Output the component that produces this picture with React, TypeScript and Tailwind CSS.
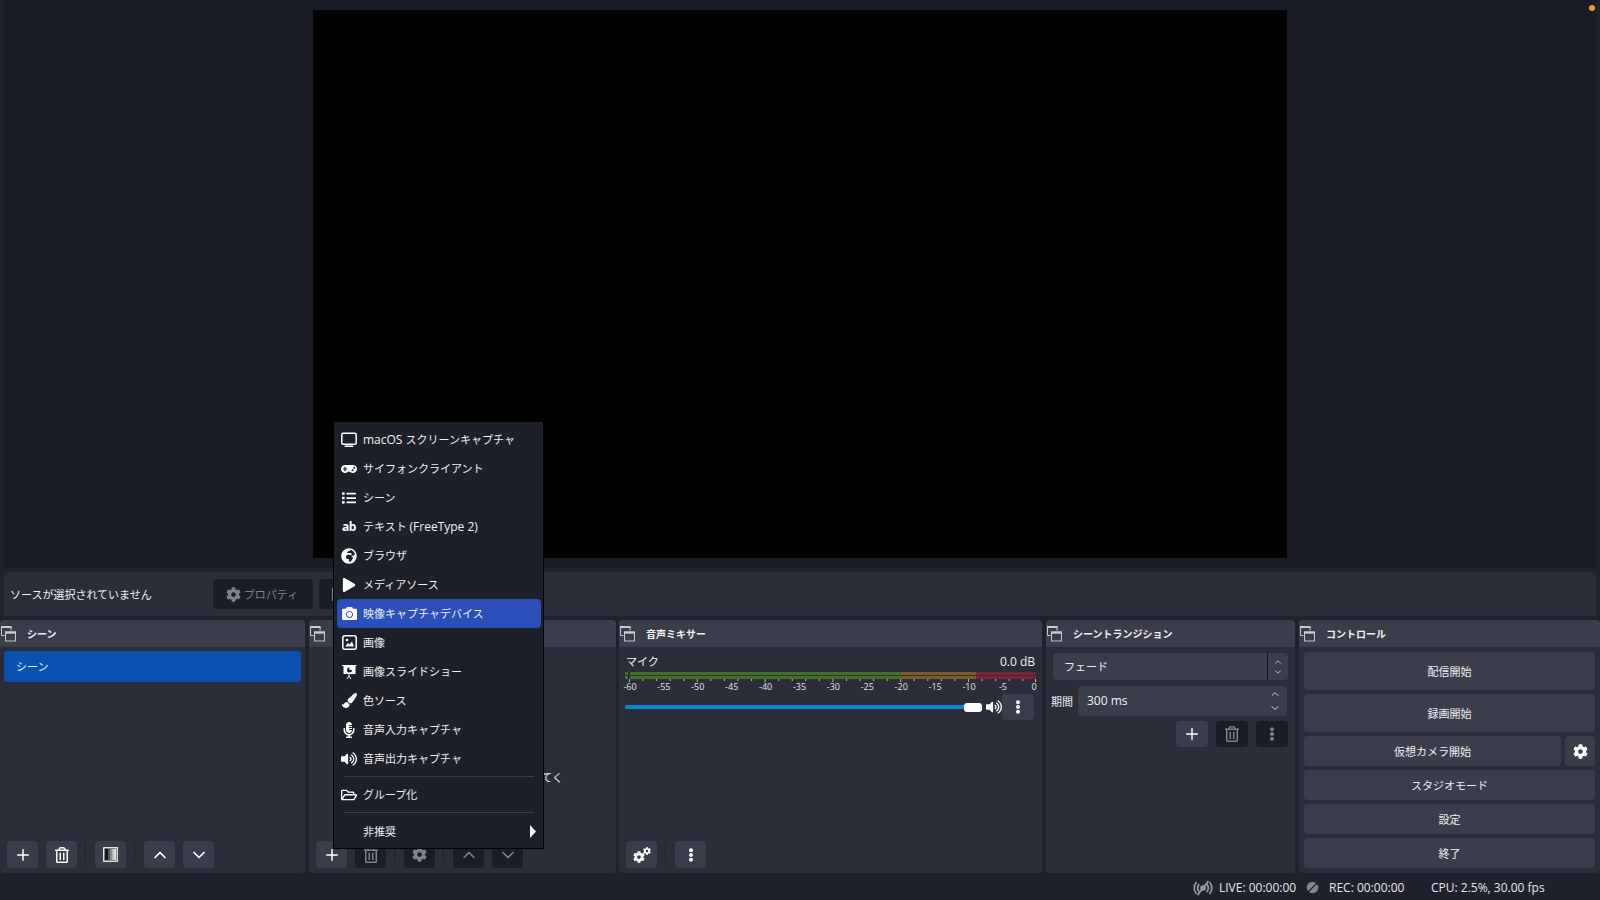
import React from 'react';
import {
  FaCamera,
  FaCog,
  FaEllipsisV,
  FaGamepad,
  FaGlobeAfrica,
  FaList,
  FaMicrophoneAlt,
  FaPaintBrush,
  FaPlay,
  FaRegFolderOpen,
  FaRegTrashAlt,
  FaVolumeUp,
} from 'react-icons/fa';
import { ChevronDown, ChevronUp, Plus } from 'lucide-react';

const FONT = "font-['Open_Sans','Noto_Sans_CJK_JP',sans-serif]";

const DockIcon = () => (
  <svg width="17" height="17" viewBox="0 0 17 17" className="shrink-0" fill="none">
    <path d="M4.500 10.500H1.500V1.500H11V5.500" stroke="#c9cad0" strokeWidth="1" />
    <rect x="1" y="1" width="10.500" height="2" fill="#c9cad0" />
    <rect x="5.500" y="7" width="10" height="9" stroke="#c9cad0" strokeWidth="1" />
    <rect x="5" y="6.500" width="11" height="2.200" fill="#c9cad0" />
  </svg>
);

const Dock = ({
  title,
  className,
  children,
}: {
  title: string;
  className: string;
  children: React.ReactNode;
}) => (
  <section className={`flex flex-col rounded-[4px] bg-[#2b2e38] overflow-hidden ${className}`}>
    <header className="flex h-[27px] shrink-0 items-center bg-[#3b3e4a]">
      <DockIcon />
      <span className="ml-[10px] pt-[2px] text-[10px] font-bold text-[#f0f0f2]">{title}</span>
    </header>
    {children}
  </section>
);

const ToolButton = ({
  disabled,
  className = 'w-[31px] h-[27px]',
  children,
}: {
  disabled?: boolean;
  className?: string;
  children: React.ReactNode;
}) => (
  <button
    type="button"
    className={`flex shrink-0 items-center justify-center rounded-[4px] ${className} ${
      disabled ? 'bg-[#1a1c26] text-[#80828a]' : 'bg-[#3b3e4a] text-white'
    }`}
  >
    {children}
  </button>
);

const Separator = () => (
  <div className="ml-[8px] mr-[9px] h-[24px] w-px shrink-0 bg-[linear-gradient(#0d0e12_1px,transparent_1px)] bg-[length:1px_3px]" />
);

const TransitionIcon = () => (
  <svg width="15" height="15" viewBox="0 0 15 15" fill="none">
    <rect x="0.750" y="0.750" width="13.500" height="13.500" stroke="white" strokeWidth="1.200" />
    <rect x="2" y="2" width="3" height="11" fill="#16171d" />
    <rect x="5" y="2" width="2" height="11" fill="#55565c" />
    <rect x="7" y="2" width="2" height="11" fill="#8a8b90" />
    <rect x="9" y="2" width="2" height="11" fill="#b9babd" />
    <rect x="11" y="2" width="2" height="11" fill="#e4e4e6" />
  </svg>
);

const ScreenIcon = () => (
  <svg width="16" height="16" viewBox="0 0 16 16" fill="none">
    <rect x="0.800" y="1.300" width="14.400" height="11" rx="1.500" stroke="white" strokeWidth="1.500" />
    <rect x="3.500" y="13.500" width="9" height="1.500" rx="0.700" fill="white" />
  </svg>
);

const ImageIcon = () => (
  <svg width="15" height="15" viewBox="0 0 15 15" fill="none">
    <rect x="0.800" y="0.800" width="13.400" height="13.400" rx="2" stroke="white" strokeWidth="1.500" />
    <circle cx="5" cy="5" r="1.300" fill="white" />
    <path d="M3 11.500L6 8l1.500 1.500L10 6.500l2 5z" fill="white" />
  </svg>
);

const SlideshowIcon = () => (
  <svg width="16" height="16" viewBox="0 0 16 16">
    <path
      fillRule="evenodd"
      d="M0.500 1h15v1h-1v8h-12V2h-1.000zM8.500 3.500a2.500 2.500 0 1 0 2.500 2.500H8.500z"
      fill="white"
    />
    <path d="M7.500 10h1v2l2 3h-1l-1.500-2.200L6.500 15h-1l2-3z" fill="white" />
  </svg>
);

const ABIcon = () => <span className="text-[12px] font-bold leading-none tracking-[-0.5px] text-white">ab</span>;

const Latin = ({ children }: { children: React.ReactNode }) => <span className="text-[12px]">{children}</span>;

const MENU_ITEMS: Array<{ id: string; label: React.ReactNode; icon: React.ReactNode; active?: boolean }> = [
  {
    id: 'screen',
    label: (
      <>
        <Latin>macOS </Latin>スクリーンキャプチャ
      </>
    ),
    icon: <ScreenIcon />,
  },
  { id: 'syphon', label: 'サイフォンクライアント', icon: <FaGamepad size={16} /> },
  { id: 'scene', label: 'シーン', icon: <FaList size={14} /> },
  {
    id: 'text',
    label: (
      <>
        テキスト <Latin>(FreeType 2)</Latin>
      </>
    ),
    icon: <ABIcon />,
  },
  { id: 'browser', label: 'ブラウザ', icon: <FaGlobeAfrica size={16} /> },
  { id: 'media', label: 'メディアソース', icon: <FaPlay size={14} /> },
  { id: 'video', label: '映像キャプチャデバイス', icon: <FaCamera size={15} />, active: true },
  { id: 'image', label: '画像', icon: <ImageIcon /> },
  { id: 'slideshow', label: '画像スライドショー', icon: <SlideshowIcon /> },
  { id: 'color', label: '色ソース', icon: <FaPaintBrush size={15} /> },
  { id: 'input', label: '音声入力キャプチャ', icon: <FaMicrophoneAlt size={16} /> },
  { id: 'output', label: '音声出力キャプチャ', icon: <FaVolumeUp size={16} /> },
];

const MenuRow = ({
  label,
  icon,
  active,
  trailing,
}: {
  label: React.ReactNode;
  icon?: React.ReactNode;
  active?: boolean;
  trailing?: React.ReactNode;
}) => (
  <div
    className={`flex h-[29px] items-center rounded-[4px] pl-[4px] pr-[5px] ${active ? 'bg-[#2a4fb9]' : ''}`}
  >
    <span className="flex w-[16px] shrink-0 items-center justify-center text-white">{icon}</span>
    <span className="ml-[6px] flex-1 text-[11px] leading-[16px] text-[#f0f0f2]">{label}</span>
    {trailing}
  </div>
);

const SourceMenu = () => (
  <div className="absolute left-[333px] top-[421px] z-10 h-[428px] w-[211px] border border-black bg-[#1e2029] pl-[3px] pr-[2px] pt-[3px]">
    {MENU_ITEMS.map(({ id, ...item }) => (
      <MenuRow key={id} {...item} />
    ))}
    <div className="mx-[7px] mt-[3px] h-px bg-[#3b3e4a]" />
    <div className="mt-[3px]">
      <MenuRow label="グループ化" icon={<FaRegFolderOpen size={16} />} />
    </div>
    <div className="mx-[7px] mt-[3px] h-px bg-[#3b3e4a]" />
    <div className="mt-[4px]">
      <MenuRow
        label="非推奨"
        trailing={
          <svg width="6" height="13" viewBox="0 0 6 13">
            <path d="M0 0l6 6.500-6 6.500z" fill="white" />
          </svg>
        }
      />
    </div>
  </div>
);

const DB_LABELS = [-60, -55, -50, -45, -40, -35, -30, -25, -20, -15, -10, -5, 0];

const MeterScale = () => (
  <svg width="411" height="16" viewBox="0 0 411 16" className="block overflow-visible">
    {Array.from({ length: 31 }, (_, index) => {
      const x = 4 + index * 2 * 6.78;
      return (
        <rect key={index} x={Math.min(x, 410)} y={0} width={1} height={(index * 2) % 5 === 0 ? 3 : 2} fill="#b9bac0" />
      );
    })}
    {DB_LABELS.map((db) => {
      const x = 5 + (db + 60) * 6.78;
      return (
        <text
          key={db}
          x={db === 0 ? 409 : x}
          y={11}
          textAnchor="middle"
          fill="#e4e4e8"
          fontSize="9"
          fontFamily="'Open Sans', sans-serif"
        >
          {db}
        </text>
      );
    })}
  </svg>
);

const MeterRow = () => (
  <div className="flex h-[3px]">
    <div className="w-[276px] bg-[#3f7222]" />
    <div className="w-[75px] bg-[#7c5a24]" />
    <div className="w-[60px] bg-[#7a2334]" />
  </div>
);

const ControlButton = ({ label, className }: { label: string; className: string }) => (
  <button
    type="button"
    className={`flex items-center justify-center rounded-[4px] bg-[#3b3e4a] pt-[2px] text-[11px] text-[#f0f0f2] ${className}`}
  >
    {label}
  </button>
);

const StreamOffIcon = () => (
  <svg width="20" height="16" viewBox="0 0 20 16" fill="none" stroke="#9a9ba0" strokeWidth="1.700">
    <path d="M3.500 2C0.500 5.500 0.500 10.500 3.500 14M16.500 2C19.500 5.500 19.500 10.500 16.500 14" />
    <path d="M6.200 4C4.300 6.500 4.300 9.500 6.200 12M13.800 4C15.700 6.500 15.700 9.500 13.800 12" />
    <circle cx="10" cy="8" r="2.800" fill="#9a9ba0" stroke="none" />
    <path d="M4.500 15L15.500 1" strokeWidth="1.800" />
  </svg>
);

const RecOffIcon = () => (
  <svg width="13" height="13" viewBox="0 0 13 13">
    <circle cx="6.500" cy="6.500" r="5.800" fill="#85868a" />
    <path d="M0.500 12.500L12.500 0.500" stroke="#1f222c" strokeWidth="1.200" />
  </svg>
);

const SceneToolbar = () => (
  <div className="mt-auto flex items-center pb-[5px] pl-[7px]">
    <ToolButton>
      <Plus size={18} strokeWidth={2} />
    </ToolButton>
    <ToolButton className="ml-[8px] h-[27px] w-[31px]">
      <FaRegTrashAlt size={16} />
    </ToolButton>
    <Separator />
    <ToolButton>
      <TransitionIcon />
    </ToolButton>
    <Separator />
    <ToolButton>
      <ChevronUp size={20} strokeWidth={2} />
    </ToolButton>
    <ToolButton className="ml-[8px] h-[27px] w-[31px]">
      <ChevronDown size={20} strokeWidth={2} />
    </ToolButton>
  </div>
);

const SourceToolbar = () => (
  <div className="mt-auto flex items-center pb-[5px] pl-[7px]">
    <ToolButton>
      <Plus size={18} strokeWidth={2} />
    </ToolButton>
    <ToolButton disabled className="ml-[8px] h-[27px] w-[31px]">
      <FaRegTrashAlt size={16} />
    </ToolButton>
    <Separator />
    <ToolButton disabled>
      <FaCog size={15} />
    </ToolButton>
    <Separator />
    <ToolButton disabled>
      <ChevronUp size={20} strokeWidth={2} />
    </ToolButton>
    <ToolButton disabled className="ml-[8px] h-[27px] w-[31px]">
      <ChevronDown size={20} strokeWidth={2} />
    </ToolButton>
  </div>
);

export default function App() {
  return (
    <div className={`relative flex h-[900px] w-[1600px] flex-col overflow-hidden bg-[#1f222c] ${FONT}`}>
      <div className="mx-[4px] flex h-[568px] shrink-0 items-start justify-center bg-[#191c26] pt-[10px]">
        <div className="h-[548px] w-[974px] bg-black" />
      </div>

      <div className="mx-[4px] mt-[4px] flex h-[44px] shrink-0 items-center rounded-[4px] bg-[#2b2e38] pl-[6px]">
        <span className="w-[203px] pt-[2px] text-[11px] text-[#f0f0f2]">ソースが選択されていません</span>
        <button
          type="button"
          className="flex h-[30px] w-[100px] items-center justify-center gap-[3px] rounded-[4px] bg-[#1a1c26] pr-[2px] text-[11px] text-[#80828a]"
        >
          <FaCog size={15} />
          <span className="pt-[2px]">プロパティ</span>
        </button>
        <button
          type="button"
          className="ml-[6px] flex h-[30px] w-[100px] items-center rounded-[4px] bg-[#1a1c26] pl-[13px] text-[#80828a]"
        >
          <span className="h-[13px] w-[2px] bg-[#80828a]" />
        </button>
      </div>

      <div className="mt-[4px] flex h-[253px] shrink-0">
        <Dock title="シーン" className="w-[305px]">
          <div className="mx-[4px] mt-[4px] flex h-[31px] items-center rounded-[3px] bg-[#0a50b0] pl-[12px] pt-[2px] text-[11px] text-[#f0f0f2]">
            シーン
          </div>
          <SceneToolbar />
        </Dock>

        <Dock title="ソース" className="ml-[4px] w-[307px]">
          <div className="mt-[123px] overflow-hidden whitespace-nowrap pr-[53px] text-right text-[11px] text-[#f0f0f2]">
            下の + ボタンをクリックして追加してく
          </div>
          <SourceToolbar />
        </Dock>

        <Dock title="音声ミキサー" className="ml-[3px] w-[423px]">
          <div className="flex items-center justify-between pl-[7px] pr-[7px] pt-[6px] text-[11px] leading-[18px] text-[#f0f0f2]">
            <span>マイク</span>
            <span className="text-[12px]">0.0 dB</span>
          </div>
          <div className="relative ml-[6px] mt-[1px] flex w-[411px] flex-col gap-px">
            <MeterRow />
            <MeterRow />
            <div className="absolute left-[3px] top-0 h-[7px] w-[2px] bg-[#2b2e38]" />
          </div>
          <div className="ml-[6px]">
            <MeterScale />
          </div>
          <div className="ml-[6px] mt-[-1px] flex items-center">
            <div className="h-[4px] w-[339px] rounded-l-full bg-[#0a84d6]" />
            <div className="h-[9px] w-[18px] rounded-[3px] bg-white" />
            <span className="ml-[4px] flex w-[16px] justify-center text-white">
              <FaVolumeUp size={16} />
            </span>
            <ToolButton className="h-[26px] w-[32px]">
              <FaEllipsisV size={14} />
            </ToolButton>
          </div>
          <div className="mt-auto flex items-center pb-[5px] pl-[7px]">
            <ToolButton>
              <span className="relative block h-[16px] w-[18px]">
                <FaCog size={12} className="absolute bottom-0 left-0" />
                <FaCog size={8} className="absolute right-0 top-0" />
              </span>
            </ToolButton>
            <Separator />
            <ToolButton>
              <FaEllipsisV size={14} />
            </ToolButton>
          </div>
        </Dock>

        <Dock title="シーントランジション" className="ml-[4px] w-[249px]">
          <div className="ml-[7px] mt-[6px] flex h-[27px] w-[235px] items-center rounded-[4px] bg-[#3b3e4a] text-[11px] text-[#f0f0f2]">
            <span className="flex-1 pl-[11px] pt-[2px]">フェード</span>
            <span className="flex h-full w-[21px] flex-col items-center justify-center border-l border-[#12131a] text-[#e8e8ea]">
              <ChevronUp size={10} strokeWidth={1.8} />
              <ChevronDown size={10} strokeWidth={1.8} />
            </span>
          </div>
          <div className="ml-[5px] mt-[6px] flex items-center">
            <span className="w-[27px] pt-[2px] text-[11px] text-[#f0f0f2]">期間</span>
            <div className="flex h-[30px] w-[209px] items-center justify-between rounded-[4px] bg-[#3b3e4a] pl-[9px] pr-[6px] text-[12px] text-[#f0f0f2]">
              300 ms
              <span className="flex flex-col items-center gap-[2px] text-[#e8e8ea]">
                <ChevronUp size={12} strokeWidth={1.8} />
                <ChevronDown size={12} strokeWidth={1.8} />
              </span>
            </div>
          </div>
          <div className="mr-[7px] mt-[5px] flex justify-end gap-[8px]">
            <ToolButton className="h-[26px] w-[32px]">
              <Plus size={18} strokeWidth={2} />
            </ToolButton>
            <ToolButton disabled className="h-[26px] w-[32px]">
              <FaRegTrashAlt size={16} />
            </ToolButton>
            <ToolButton disabled className="h-[26px] w-[32px]">
              <FaEllipsisV size={14} />
            </ToolButton>
          </div>
        </Dock>

        <Dock title="コントロール" className="ml-[4px] flex-1">
          <div className="flex flex-col gap-[4px] px-[5px] pt-[5px]">
            <ControlButton label="配信開始" className="h-[38px]" />
            <ControlButton label="録画開始" className="h-[38px]" />
            <div className="flex gap-[4px]">
              <ControlButton label="仮想カメラ開始" className="h-[30px] flex-1" />
              <ToolButton className="h-[30px] w-[30px]">
                <FaCog size={15} />
              </ToolButton>
            </div>
            <ControlButton label="スタジオモード" className="h-[30px]" />
            <ControlButton label="設定" className="h-[30px]" />
            <ControlButton label="終了" className="h-[30px]" />
          </div>
        </Dock>
      </div>

      <footer className="flex h-[27px] items-center pl-[1193px] pt-[2px] text-[12px] text-[#e6e6ea]">
        <StreamOffIcon />
        <span className="ml-[6px] w-[87px]">LIVE: 00:00:00</span>
        <RecOffIcon />
        <span className="ml-[10px] w-[102px]">REC: 00:00:00</span>
        <span>CPU: 2.5%, 30.00 fps</span>
      </footer>

      <SourceMenu />
      <div className="absolute left-[1589px] top-[5px] h-[6px] w-[6px] rounded-full bg-[#f7962b]" />
    </div>
  );
}
